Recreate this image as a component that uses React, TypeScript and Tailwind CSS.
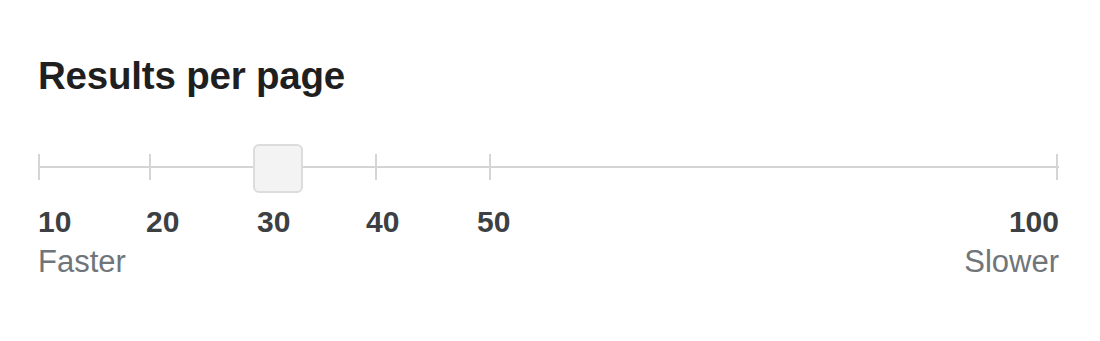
import React from "react";

const marks = [
  { v: 10, label: 0 },
  { v: 20, label: 108 },
  { v: 30, label: 219 },
  { v: 40, label: 328 },
  { v: 50, label: 439 },
];

export default function App() {
  return (
    <div
      className="w-[1100px] h-[341px] bg-white pl-[38px] pt-[54px]"
      style={{ fontFamily: '"Liberation Sans", Arial, sans-serif' }}
    >
      <h1 className="text-[38.5px] leading-[44px] font-bold text-[#1f1f1f] tracking-[-0.2px]">
        Results per page
      </h1>
      <div className="relative w-[1021px] h-[60px] mt-[56px]">
        <svg className="absolute left-0 top-0" width="1021" height="60" viewBox="0 0 1021 60">
          <rect x="0" y="12" width="1021" height="2" fill="#d5d5d5" />
          {[1, 112, 338, 452, 1019].map((x) => (
            <rect key={x} x={x - 1} y="0" width="2" height="26" fill="#d5d5d5" />
          ))}
        </svg>
        <div className="absolute left-[215px] top-[-10px] w-[50px] h-[49px] rounded-[6px] bg-[#f3f3f3] border-2 border-[#dcdcdc]" />
      </div>
      <div className="relative w-[1021px] h-[40px] -mt-[12px]">
        {marks.map((m) => (
          <span
            key={m.v}
            className="absolute top-0 text-[30px] leading-[40px] font-bold text-[#3c4043]"
            style={{ left: m.label }}
          >
            {m.v}
          </span>
        ))}
        <span className="absolute right-0 top-0 text-[30px] leading-[40px] font-bold text-[#3c4043]">
          100
        </span>
      </div>
      <div className="flex w-[1021px] justify-between text-[31px] leading-[40px] text-[#70757a]">
        <span>Faster</span>
        <span>Slower</span>
      </div>
    </div>
  );
}
